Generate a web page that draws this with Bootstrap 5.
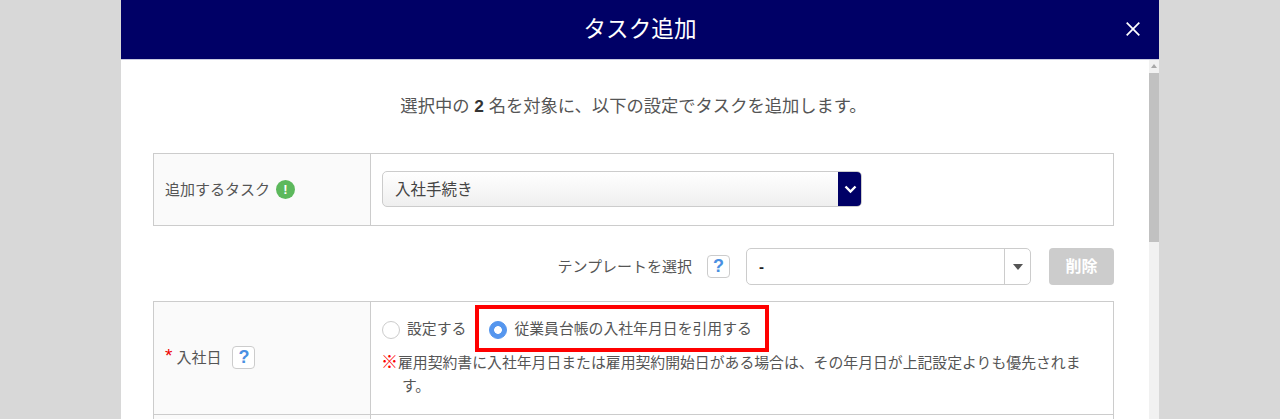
<!DOCTYPE html>
<html lang="ja">
<head>
<meta charset="utf-8">
<title>タスク追加</title>
<link href="https://cdn.jsdelivr.net/npm/bootstrap@5.3.0/dist/css/bootstrap.min.css" rel="stylesheet">
<style>
html, body { height: 419px; overflow: hidden; }
body { background: #d8d8d8; font-family: "Liberation Sans", "Noto Sans CJK JP", sans-serif; font-size: 15px; line-height: 23px; color: #555; }
.dlg { width: 1038px; height: 419px; margin-left: 121px; background: #fff; overflow: hidden; }
.dlg-head { height: 60px; background: #000066; color: #fff; border-bottom: 1px solid #c9cbe0; padding-right: 19px; }
.dlg-title { font-size: 22.6px; line-height: 59px; padding-left: 33px; }
.dlg-close { width: 14px; height: 14px; display: block; margin-top: -2px; }
.dlg-main { height: 359px; }
.dlg-scroll { width: 10px; background: #f1f1f1; }
.scroll-up { height: 13px; color: #a0a0a0; }
.scroll-thumb { height: 169px; background: #c1c1c1; }
.dlg-body { padding: 0 35px 0 32px; }
.intro { font-size: 17.3px; line-height: 24px; padding-top: 34px; height: 93px; margin: 0; }
.intro b { color: #333; }
.frm { border: 1px solid #ccc; }
.frm-row { border-bottom: 1px solid #ccc; }
.frm-row:last-child { border-bottom: 0; }
.frm-label { width: 217px; flex: none; background: #fafafa; border-right: 1px solid #ccc; padding-left: 11px; }
.frm-label-up { padding-bottom: 2px; }
.frm-value { padding-left: 11px; padding-right: 30px; }
.h-task { height: 71px; }
.h-date { height: 113px; }
.h-next { height: 40px; }
.pick { width: 480px; height: 36px; margin-top: -1px; border: 1px solid #ccc; border-radius: 5px; background: linear-gradient(#ffffff, #efefef); overflow: hidden; font-size: 15.5px; }
.pick-text { padding-left: 12px; color: #444; }
.pick-btn { width: 24px; height: 36px; margin: -1px; background: #000066; }
.ok-icon { width: 19px; height: 19px; margin-left: 6px; background: #5cb85c; color: #fff; font-size: 13px; font-weight: 700; line-height: 19px; text-align: center; border-radius: 50%; }
.tpl-row { height: 75px; padding-top: 22px; padding-bottom: 16px; }
.help { width: 23px; height: 23px; border: 1px solid #ccc; border-radius: 4px; background: #fff; color: #4a90e2; font-family: "Liberation Sans", sans-serif; font-size: 18px; font-weight: 700; line-height: 21px; text-align: center; }
.tpl-label { margin-right: 15px; }
.combo { width: 285px; height: 37px; margin-left: 16px; border: 1px solid #ccc; border-radius: 5px; }
.combo-text { padding-left: 12px; color: #222; font-weight: 700; }
.combo-arrow { width: 26px; border-left: 1px solid #ccc; }
.combo-tri { width: 0; height: 0; border-left: 5.5px solid transparent; border-right: 5.5px solid transparent; border-top: 6px solid #555; }
.del-btn { width: 65px; height: 37px; margin-left: 18px; padding: 0; background: #ccc; border: 0; border-radius: 4px; color: #fff; font-size: 16px; font-weight: 700; }
.req { color: #e00; font-size: 19px; font-weight: 400; margin-right: 4px; margin-top: -4px; }
.help-gap { margin-left: 11px; }
.radio-box { height: 48px; padding-top: 16px; font-size: 14.85px; }
.radio-box .form-check-input { width: 18px; height: 18px; margin: 0 7px 0 0; border: 1px solid #ccc; flex: none; }
.radio-box .form-check-input:checked { background-color: #5596ee; border-color: #5596ee; background-image: radial-gradient(circle, #fff 3.5px, transparent 4.2px); }
.radio-item { margin-right: 23px; display: flex; align-items: center; }
.note { padding-left: 20px; margin: 1px 0 0; text-indent: -20px; font-size: 14.85px; }
.note b { color: #f00; font-size: 17px; margin-left: -1px; }
.hilite { left: 104px; top: 3px; width: 294px; height: 47px; border: 4px solid #f00; }
</style>
</head>
<body>
<div class="dlg">
  <header class="dlg-head d-flex align-items-center justify-content-between">
    <div class="flex-grow-1 text-center dlg-title">タスク追加</div>
    <svg class="dlg-close" viewBox="0 0 14 14"><path d="M.7.7l12.6 12.6M13.3.7L.7 13.3" stroke="#fff" stroke-width="1.7" fill="none"/></svg>
  </header>
  <div class="dlg-main d-flex">
    <div class="dlg-body flex-grow-1">
      <p class="intro text-center">選択中の <b>2</b> 名を対象に、以下の設定でタスクを追加します。</p>
      <div class="frm">
        <div class="frm-row d-flex h-task">
          <div class="frm-label d-flex align-items-center">追加するタスク<span class="ok-icon">!</span></div>
          <div class="frm-value d-flex align-items-center flex-grow-1">
            <div class="pick d-flex align-items-center justify-content-between">
              <span class="pick-text">入社手続き</span>
              <span class="pick-btn d-flex align-items-center justify-content-center">
                <svg width="13" height="9" viewBox="0 0 13 9"><path d="M1.5 1.5l5 5 5-5" stroke="#fff" stroke-width="2.4" fill="none"/></svg>
              </span>
            </div>
          </div>
        </div>
      </div>
      <div class="tpl-row d-flex align-items-center justify-content-end">
        <span class="tpl-label">テンプレートを選択</span>
        <span class="help">?</span>
        <div class="combo d-flex justify-content-between">
          <span class="combo-text align-self-center">-</span>
          <span class="combo-arrow d-flex align-items-center justify-content-center"><span class="combo-tri"></span></span>
        </div>
        <button class="del-btn" type="button">削除</button>
      </div>
      <div class="frm">
        <div class="frm-row d-flex h-date">
          <div class="frm-label frm-label-up d-flex align-items-center"><span class="req">*</span>入社日<span class="help help-gap">?</span></div>
          <div class="frm-value flex-grow-1 position-relative">
            <div class="radio-box d-flex align-items-start">
              <label class="radio-item"><input class="form-check-input" type="radio" name="d">設定する</label>
              <label class="radio-item"><input class="form-check-input" type="radio" name="d" checked>従業員台帳の入社年月日を引用する</label>
            </div>
            <p class="note"><b>※</b>雇用契約書に入社年月日または雇用契約開始日がある場合は、その年月日が上記設定よりも優先されます。</p>
            <div class="hilite position-absolute"></div>
          </div>
        </div>
        <div class="frm-row d-flex h-next">
          <div class="frm-label"></div>
          <div class="frm-value flex-grow-1"></div>
        </div>
      </div>
    </div>
    <div class="dlg-scroll d-flex flex-column flex-shrink-0">
      <div class="scroll-up d-flex justify-content-center">
        <svg width="8" height="13" viewBox="0 0 8 13"><path d="M1 8l3-4 3 4z" fill="#a8a8a8"/></svg>
      </div>
      <div class="scroll-thumb"></div>
    </div>
  </div>
</div>
<script src="https://cdn.jsdelivr.net/npm/bootstrap@5.3.0/dist/js/bootstrap.bundle.min.js"></script>
</body>
</html>
